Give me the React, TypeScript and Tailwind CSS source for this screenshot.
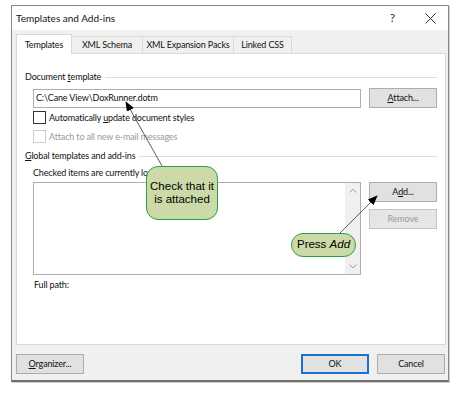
import React from "react";

const ui = { fontFamily: 'Lato, "Noto Sans", sans-serif' };
const callout = { fontFamily: '"Liberation Sans", Arial, sans-serif' };

function GroupHeader({ children }: { children: React.ReactNode }) {
  return (
    <div className="flex items-center h-[14px] gap-[4px]">
      <span className="whitespace-nowrap">{children}</span>
      <div className="flex-1 border-t border-[#dcdcdc] mt-[1px]" />
    </div>
  );
}

function Button({
  children,
  disabled,
  primary,
  className = "",
}: {
  children: React.ReactNode;
  disabled?: boolean;
  primary?: boolean;
  className?: string;
}) {
  return (
    <div
      className={`flex items-center justify-center h-[20px] bg-[#e1e1e1] border ${
        primary ? "border-[#1a73c8] shadow-[inset_0_0_0_1px_#1a73c8]" : "border-[#adadad]"
      } ${disabled ? "text-[#9a9a9a] bg-[#e6e6e6] border-[#c4c4c4]" : "text-[#111]"} ${className}`}
    >
      {children}
    </div>
  );
}

function Tab({ label, active, className = "" }: { label: string; active?: boolean; className?: string }) {
  return active ? (
    <div className={`h-[20px] -mb-px z-10 flex items-center justify-center whitespace-nowrap bg-white border border-b-0 border-[#d9d9d9] ${className}`}>
      {label}
    </div>
  ) : (
    <div className={`h-[17px] flex items-center justify-center whitespace-nowrap border border-b-0 border-l-0 border-[#d9d9d9] bg-[#f0f0f0] ${className}`}>
      {label}
    </div>
  );
}

function Checkbox({ disabled }: { disabled?: boolean }) {
  return (
    <div
      className={`w-[13px] h-[13px] border bg-white ${
        disabled ? "border-[#cccccc]" : "border-[#333]"
      }`}
    />
  );
}

export default function App() {
  return (
    <div className="relative w-[458px] h-[404px] bg-white text-[9px] tracking-[-0.15px] text-[#111]" style={ui}>
      <div className="ml-[11px] pt-[5px]">
        <div className="w-[438px] h-[377px] flex flex-col border border-[#8a8a8a] border-b-2 border-b-[#6f6f6f] shadow-[1px_1px_0_#d0d0d0]">
          {/* title bar */}
          <div className="h-[24px] bg-white flex items-center pl-[4px] pr-[10px] text-[10px] tracking-normal">
            <span className="flex-1">Templates and Add-ins</span>
            <span className="text-[12px] text-[#333] mr-[30px]">?</span>
            <svg width="11" height="11" viewBox="0 0 11 11" className="mr-[2px]">
              <path d="M0.5 0.5 L10.5 10.5 M10.5 0.5 L0.5 10.5" stroke="#333" strokeWidth="1" />
            </svg>
          </div>

          {/* body */}
          <div className="flex-1 bg-[#f0f0f0] flex flex-col pl-[4px] pr-[2px] pt-[4px]">
            <div className="flex items-end">
              <Tab label="Templates" active className="w-[56px]" />
              <Tab label="XML Schema" className="w-[71px]" />
              <Tab label="XML Expansion Packs" className="w-[91px]" />
              <Tab label="Linked CSS" className="w-[58px]" />
            </div>

            <div className="h-[292px] bg-white border border-[#d9d9d9] px-[8px] pt-[16px]">
              <GroupHeader>
                Document <span className="underline">t</span>emplate
              </GroupHeader>

              <div className="flex items-center mt-[4px] pl-[8px]">
                <div className="w-[329px] h-[19px] border border-[#adadad] flex items-center pl-[2px]">
                  C:\Cane View\DoxRunner.dotm
                </div>
                <Button className="ml-[8px] w-[68px]">
                  <span className="underline">A</span>ttach...
                </Button>
              </div>

              <div className="flex items-center gap-[3px] mt-[3px] pl-[8px] h-[13px]">
                <Checkbox />
                <span>
                  Automatically <span className="underline">u</span>pdate document styles
                </span>
              </div>
              <div className="flex items-center gap-[3px] mt-[6px] pl-[8px] h-[13px] text-[#9a9a9a]">
                <Checkbox disabled />
                <span>Attach to all new e-mail messages</span>
              </div>

              <div className="mt-[6px]">
                <GroupHeader>
                  <span className="underline">G</span>lobal templates and add-ins
                </GroupHeader>
              </div>

              <div className="mt-[3px] pl-[8px] h-[14px] flex items-center">
                Checked items are currently loaded.
              </div>

              <div className="flex items-start mt-[2px] pl-[8px]">
                <div className="w-[329px] h-[93px] border border-[#adadad] flex justify-end">
                  <div className="w-[15px] bg-[#f0f0f0] flex flex-col items-center justify-between py-[5px]">
                    <svg width="8" height="5" viewBox="0 0 8 5">
                      <path d="M0.5 4.5 L4 1 L7.5 4.5" fill="none" stroke="#a0a0a0" strokeWidth="1" />
                    </svg>
                    <svg width="8" height="5" viewBox="0 0 8 5">
                      <path d="M0.5 0.5 L4 4 L7.5 0.5" fill="none" stroke="#a0a0a0" strokeWidth="1" />
                    </svg>
                  </div>
                </div>
                <div className="ml-[8px] flex flex-col gap-[7px]">
                  <Button className="w-[68px] h-[19px]">
                    A<span className="underline">d</span>d...
                  </Button>
                  <Button className="w-[68px] h-[19px]" disabled>
                    Remove
                  </Button>
                </div>
              </div>

              <div className="mt-[3px] pl-[9px] h-[14px] flex items-center">Full path:</div>
            </div>

            <div className="flex items-center mt-[9px] pl-0 pr-[1px]">
              <Button className="w-[68px] h-[20px]">
                <span className="underline">O</span>rganizer...
              </Button>
              <div className="flex-1" />
              <Button className="w-[68px] h-[20px]" primary>
                OK
              </Button>
              <Button className="ml-[8px] w-[68px] h-[20px]">Cancel</Button>
            </div>
          </div>
        </div>
      </div>

      {/* annotation arrows */}
      <svg className="absolute left-0 top-0 pointer-events-none" width="458" height="404">
        <defs>
          <marker id="ah" markerWidth="10" markerHeight="8" refX="9" refY="4" orient="auto" markerUnits="userSpaceOnUse">
            <path d="M0 0 L10 4 L0 8 Z" fill="#000" />
          </marker>
        </defs>
        <line x1="162" y1="166" x2="126" y2="102" stroke="#333" strokeWidth="0.8" markerEnd="url(#ah)" />
        <line x1="340" y1="233" x2="377" y2="196" stroke="#333" strokeWidth="0.8" markerEnd="url(#ah)" />
      </svg>

      {/* callouts */}
      <div
        className="absolute left-[146px] top-[166px] w-[72px] h-[54px] rounded-[12px] bg-[#cbdaa6] border-[1.5px] border-[#27a24a] flex items-center justify-center text-center text-[11.5px] leading-[13px] tracking-normal text-black"
        style={callout}
      >
        Check that it
        <br />
        is attached
      </div>
      <div
        className="absolute left-[291px] top-[233px] w-[65px] h-[24px] rounded-full bg-[#cbdaa6] border-[1.5px] border-[#27a24a] flex items-center justify-center text-[11.5px] tracking-normal text-black"
        style={callout}
      >
        Press&nbsp;<i>Add</i>
      </div>
    </div>
  );
}
